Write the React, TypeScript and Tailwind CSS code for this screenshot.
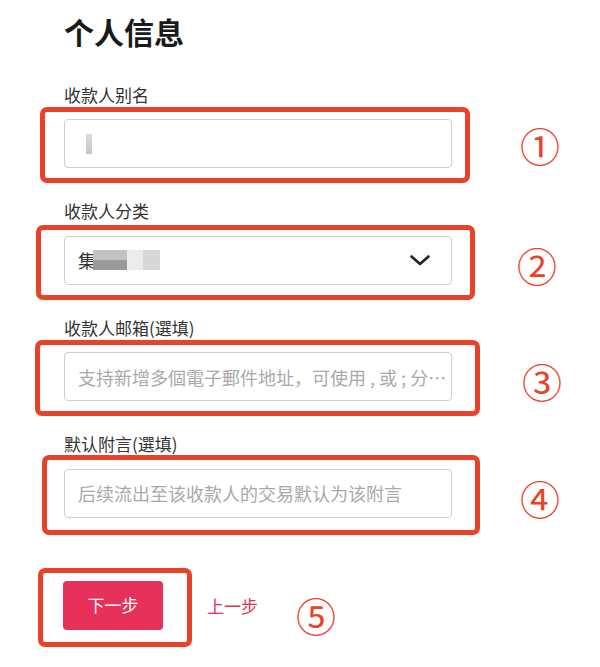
import type { ReactNode } from 'react';
import clsx from 'clsx';

// Annotation ink: the hand-drawn red frames and circled step numbers.
const FRAME =
    'pointer-events-none absolute rounded-[7px] border-[5px] border-[#ea4229]';
const MARK =
    "shrink-0 text-[40px] leading-none text-[#ea4229] font-['Noto_Sans_CJK_SC',sans-serif]";

const BOX =
    'h-[49px] w-full rounded-[4px] border border-[#cfcfcf] bg-white px-[13px] text-[18px] text-[#333] outline-none placeholder:text-[#a9a9a9]';

function Field({
    label,
    frame,
    mark,
    markClass,
    first,
    children,
}: {
    label: string;
    frame: string;
    mark: string;
    markClass: string;
    first?: boolean;
    children: ReactNode;
}) {
    return (
        <div className={first ? 'mt-[32px]' : 'mt-[31px]'}>
            <div className="text-[17px] leading-[24px] text-[#333]">
                {label}
            </div>
            <div className="mt-3 flex items-center">
                <div className="relative w-[388px]">
                    <span className={clsx(FRAME, frame)} />
                    {children}
                </div>
                <span className={clsx(MARK, markClass)}>{mark}</span>
            </div>
        </div>
    );
}

export default function App() {
    return (
        <div className="h-[667px] w-full overflow-hidden bg-white pt-[11px] pl-[64px] font-['Noto_Sans_CJK_SC','Noto_Sans',sans-serif]">
            <h1 className="text-[30px] leading-[40px] font-bold text-[#1a1a1a]">
                个人信息
            </h1>

            <Field
                first
                label="收款人别名"
                frame="left-[-24px] right-[-18px] top-[-12px] bottom-[-15px]"
                mark="①"
                markClass="ml-[68px] mt-[2px]"
            >
                {/* blurred existing value */}
                <div className={clsx(BOX, 'flex items-center')}>
                    <span className="ml-[8px] h-[20px] w-[6px] bg-gradient-to-b from-[#dcdcdc] to-[#c6c6c6]" />
                </div>
            </Field>

            <Field
                label="收款人分类"
                frame="left-[-28px] right-[-23px] top-[-11px] bottom-[-15px]"
                mark="②"
                markClass="ml-[65px] mt-[10px]"
            >
                <div
                    className={clsx(
                        BOX,
                        'flex items-center justify-between pr-[21px]',
                    )}
                >
                    <span className="flex h-[20px] items-center">
                        <span className="text-[18px] text-[#333]">集</span>
                        <span className="-ml-[3px] flex h-[20px] flex-col">
                            <span className="h-[10px] w-[34px] bg-[#c2c2c2]" />
                            <span className="h-[10px] w-[34px] bg-[#9a9a9a]" />
                        </span>
                        <span className="h-[20px] w-[16px] bg-[#ececec]" />
                        <span className="h-[20px] w-[17px] bg-[#d7d7d7]" />
                    </span>
                    <svg
                        width="20"
                        height="11"
                        viewBox="0 0 20 11"
                        fill="none"
                        stroke="#222"
                        strokeWidth="2.6"
                        strokeLinecap="round"
                        strokeLinejoin="round"
                    >
                        <polyline points="1.5,1.5 10,9 18.5,1.5" />
                    </svg>
                </div>
            </Field>

            <Field
                label="收款人邮箱(選填)"
                frame="left-[-29px] right-[-28px] top-[-12px] bottom-[-15px]"
                mark="③"
                markClass="ml-[70px] mt-[8px]"
            >
                <input
                    className={clsx(BOX, 'truncate pr-[2px]')}
                    placeholder="支持新增多個電子郵件地址，可使用 , 或 ; 分隔多個地址"
                />
            </Field>

            <Field
                label="默认附言(選填)"
                frame="left-[-22px] right-[-28px] top-[-14px] bottom-[-17px]"
                mark="④"
                markClass="ml-[68px] mt-[10px]"
            >
                <input
                    className={clsx(BOX, 'truncate')}
                    placeholder="后续流出至该收款人的交易默认为该附言"
                />
            </Field>

            <div className="mt-[57px] flex items-center">
                <div className="relative -ml-px">
                    <span
                        className={clsx(
                            FRAME,
                            'left-[-25px] right-[-29px] top-[-13px] bottom-[-17px]',
                        )}
                    />
                    <button
                        type="button"
                        className="h-[49px] w-[100px] rounded-[4px] bg-[#e7305a] text-[17px] text-white"
                    >
                        下一步
                    </button>
                </div>
                <span className="ml-[44px] mt-[2px] text-[17px] text-[#e7305a]">
                    上一步
                </span>
                <span className={clsx(MARK, 'ml-[38px] mt-[20px]')}>⑤</span>
            </div>
        </div>
    );
}
